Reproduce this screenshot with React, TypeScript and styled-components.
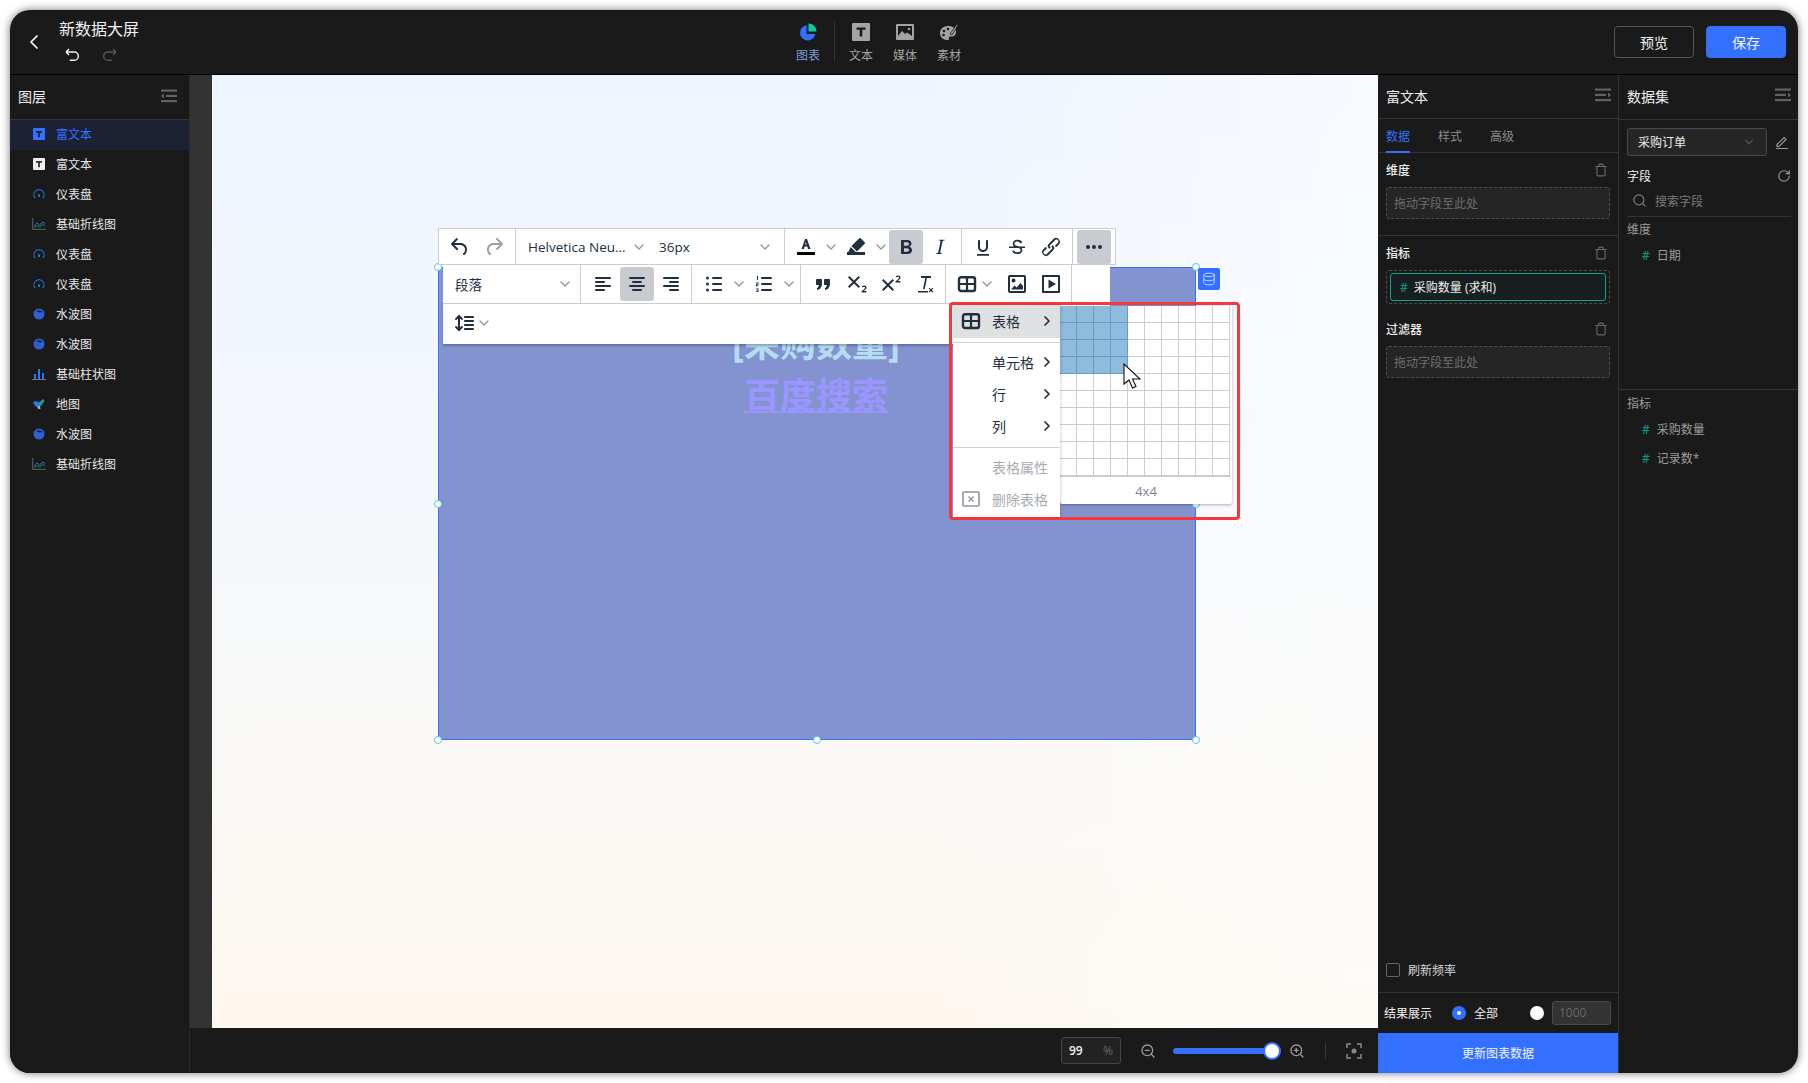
import React from "react";
import styled, {createGlobalStyle} from "styled-components";
import {ChevronDown, ChevronLeft, ChevronRight, Search, RotateCw, Trash, ZoomIn, ZoomOut, Database} from "lucide-react";

const GlobalStyle = createGlobalStyle`
	html, body {
		margin: 0;
		padding: 0;
		background: #fff;
	}
	body {
		font-family: "Open Sans", "Noto Sans CJK SC", sans-serif;
		font-size: 12px;
	}
	* {
		box-sizing: border-box;
	}
`;

const INK = "#222f3e";

const Page = styled.div`
	width: 1808px;
	height: 1083px;
	padding: 10px;
	overflow: hidden;
`;

const Window = styled.div`
	width: 1788px;
	height: 1063px;
	border-radius: 20px;
	overflow: hidden;
	background: #1a1a1a;
	box-shadow: 0 0 8px rgba(0, 0, 0, 0.55);
	display: flex;
	flex-direction: column;
	color: #e8e8e8;
`;

const Header = styled.header`
	height: 65px;
	flex: none;
	display: flex;
	align-items: center;
	border-bottom: 1px solid #000;
`;

const HeaderLeft = styled.div`
	width: 776px;
	display: flex;
	align-items: center;
	padding-left: 12px;
`;

const BackButton = styled.div`
	width: 24px;
	height: 28px;
	display: flex;
	align-items: center;
	justify-content: center;
	margin-right: 13px;
	color: #fff;
`;

const TitleBlock = styled.div`
	display: flex;
	flex-direction: column;
	gap: 6px;
	margin-top: -3px;
`;

const Title = styled.div`
	font-size: 16px;
	line-height: 22px;
	color: #f2f2f2;
`;

const History = styled.div`
	display: flex;
	gap: 20px;
	padding-left: 4px;
	height: 18px;
	align-items: center;
`;

const Tool = styled.div<{$active?: boolean}>`
	width: 44px;
	margin-top: 3px;
	display: flex;
	flex-direction: column;
	align-items: center;
	gap: 7px;
	font-size: 12px;
	line-height: 16px;
	color: ${({$active}) => ($active ? "#7b9bd6" : "#a3a3a3")};
`;

const ToolDivider = styled.div`
	width: 1px;
	height: 40px;
	background: #333;
	margin: 0 4px;
`;

const HeaderRight = styled.div`
	margin-left: auto;
	padding-right: 12px;
	display: flex;
	gap: 12px;
`;

const HeaderButton = styled.button<{$primary?: boolean}>`
	width: 80px;
	height: 32px;
	border-radius: 4px;
	font: inherit;
	font-size: 14px;
	color: #f2f2f2;
	border: 1px solid ${({$primary}) => ($primary ? "#3370ff" : "#555")};
	background: ${({$primary}) => ($primary ? "#3370ff" : "transparent")};
`;

const Body = styled.div`
	flex: 1;
	min-height: 0;
	display: flex;
`;

const Sidebar = styled.aside`
	width: 179px;
	flex: none;
	background: #1a1a1a;
`;

const PanelHeader = styled.div<{$height?: number; $right?: number}>`
	height: ${({$height = 45}) => $height}px;
	display: flex;
	align-items: center;
	justify-content: space-between;
	padding: 0 ${({$right = 12}) => $right}px 2px 8px;
	font-size: 14px;
	color: #f0f0f0;
	border-bottom: 1px solid #333;
`;

const LayerRow = styled.div<{$selected?: boolean}>`
	height: 30px;
	display: flex;
	align-items: center;
	padding: 0 0 2px 22px;
	gap: 10px;
	font-size: 12px;
	background: ${({$selected}) => ($selected ? "#1c2133" : "transparent")};
	color: ${({$selected}) => ($selected ? "#3370ff" : "#e6e6e6")};
`;

const LayerIcon = styled.span`
	width: 14px;
	height: 14px;
	display: flex;
	align-items: center;
	justify-content: center;
`;

const Center = styled.main`
	flex: 1;
	min-width: 0;
	display: flex;
	flex-direction: column;
	border-left: 1px solid #2a2a2a;
`;

const Stage = styled.div`
	flex: 1;
	min-height: 0;
	display: flex;
`;

const Gutter = styled.div`
	width: 22px;
	flex: none;
	background: #333;
`;

const Canvas = styled.div`
	flex: 1;
	min-width: 0;
	position: relative;
	background: linear-gradient(to right, rgba(255, 255, 255, 0) 60%, rgba(255, 255, 255, 0.5)),
		linear-gradient(to bottom, #eff5fe 0%, #f4f8fc 45%, #faf8f5 75%, #fdf7ef 100%);
`;

const Widget = styled.div`
	position: absolute;
	left: 226px;
	top: 192px;
	width: 758px;
	height: 473px;
	background: #8393d0;
	box-shadow: inset 0 0 0 1px #3370ff;
	text-align: center;
	font-weight: 700;
	font-size: 36px;
	line-height: 52px;
	padding: 51px 2px 0 0;
`;

const MeasureText = styled.div`
	color: #b5dcf0;
`;

const LinkText = styled.div`
	color: #9b96ff;
	text-decoration: underline;
	text-decoration-thickness: 2px;
	text-underline-offset: 2px;
`;

const Handle = styled.span`
	position: absolute;
	width: 8px;
	height: 8px;
	border-radius: 50%;
	background: #fff;
	border: 1px solid #5cc4f5;
	transform: translate(-50%, -50%);
`;

const DataBadge = styled.div`
	position: absolute;
	left: 986px;
	top: 193px;
	width: 22px;
	height: 22px;
	border-radius: 2px;
	background: #3370ff;
	color: #cfe0ff;
	display: flex;
	align-items: center;
	justify-content: center;
`;

const Toolbar = styled.div`
	position: absolute;
	left: 226px;
	top: 153px;
	width: 678px;
	color: ${INK};
	font-size: 14px;
`;

const ToolRow = styled.div<{$first?: boolean}>`
	display: flex;
	background: #fff;
	height: ${({$first}) => ($first ? 37 : 39)}px;
	width: ${({$first}) => ($first ? 678 : 667)}px;
	margin-left: ${({$first}) => ($first ? 0 : 5)}px;
	border: 1px solid #ccc;
	border-top: ${({$first}) => ($first ? "1px solid #ccc" : "none")};
	border-left: ${({$first}) => ($first ? "1px solid #ccc" : "none")};
	border-right: ${({$first}) => ($first ? "1px solid #ccc" : "none")};
`;

const LastRow = styled(ToolRow)`
	height: 40px;
	border-bottom: none;
	box-shadow: 0 2px 2px rgba(0, 0, 0, 0.25);
	align-items: center;
	padding: 0 0 2px 4px;
`;

const Group = styled.div<{$width: number; $last?: boolean; $pad?: number}>`
	width: ${({$width}) => $width}px;
	flex: none;
	display: flex;
	align-items: center;
	padding: 0 ${({$pad = 4}) => $pad}px;
	border-right: ${({$last}) => ($last ? "none" : "1px solid #ccc")};
`;

const IconButton = styled.div<{$active?: boolean; $muted?: boolean}>`
	width: 34px;
	height: 34px;
	flex: none;
	border-radius: 3px;
	display: flex;
	align-items: center;
	justify-content: center;
	background: ${({$active}) => ($active ? "#c8cbcf" : "transparent")};
	color: ${({$muted}) => ($muted ? "#9aa1a9" : INK)};
`;

const SplitArrow = styled.div<{$tight?: boolean}>`
	width: 16px;
	flex: none;
	display: flex;
	align-items: center;
	justify-content: center;
	color: #8a929b;
	margin-left: ${({$tight}) => ($tight ? -5 : 0)}px;
	margin-right: ${({$tight}) => ($tight ? 5 : 0)}px;
`;

const SelectBox = styled.div<{$width: number}>`
	width: ${({$width}) => $width}px;
	flex: none;
	display: flex;
	align-items: center;
	justify-content: space-between;
	padding-left: 8px;
	padding-right: 4px;
	font-size: 13.5px;
	svg {
		color: #8a929b;
	}
`;

const FloatLayer = styled.div`
	position: absolute;
	left: 737px;
	top: 227px;
	width: 291px;
	height: 218px;
	border: 3px solid #f5383c;
	border-radius: 4px;
	padding-left: 1px;
	display: flex;
	align-items: flex-start;
`;

const Menu = styled.div`
	width: 107px;
	height: 212px;
	flex: none;
	background: #fff;
	color: ${INK};
	font-size: 14px;
	box-shadow: 1px 0 3px rgba(0, 0, 0, 0.15);
	position: relative;
	z-index: 1;
`;

const MenuItem = styled.div<{$active?: boolean; $disabled?: boolean; $height?: number}>`
	height: ${({$height = 32}) => $height}px;
	display: flex;
	align-items: center;
	padding: 0 5px 1px 9px;
	background: ${({$active}) => ($active ? "#dee0e2" : "transparent")};
	color: ${({$disabled}) => ($disabled ? "#a6abb1" : INK)};
`;

const MenuIconSlot = styled.span<{$shift?: number}>`
	width: 30px;
	flex: none;
	display: flex;
	align-items: center;
	svg {
		margin-left: ${({$shift = 0}) => $shift}px;
	}
`;

const MenuLabel = styled.span`
	flex: 1;
	white-space: nowrap;
`;

const MenuDivider = styled.div<{$top: number; $bottom: number}>`
	height: 1px;
	background: #d0d2d4;
	margin: ${({$top}) => $top}px 0 ${({$bottom}) => $bottom}px;
`;

const GridPanel = styled.div`
	width: 172px;
	height: 198px;
	margin-top: 1px;
	background: #fff;
	box-shadow: 0 1px 3px rgba(0, 0, 0, 0.3);
	border-radius: 0 0 2px 2px;
`;

const CellGrid = styled.div`
	display: grid;
	grid-template-columns: repeat(10, 17px);
	grid-auto-rows: 17px;
	border-bottom: 1px solid #ccc;
	width: 171px;
	height: 171px;
`;

const Cell = styled.div<{$on?: boolean}>`
	background: ${({$on}) => ($on ? "#8fbbdc" : "#fff")};
	border-right: 1px solid ${({$on}) => ($on ? "#5e9fd0" : "#ccc")};
	border-bottom: 1px solid ${({$on}) => ($on ? "#5e9fd0" : "#ccc")};
`;

const GridFooter = styled.div`
	height: 27px;
	display: flex;
	align-items: center;
	justify-content: center;
	font-size: 13px;
	color: #7b8590;
`;

const Pointer = styled.svg`
	position: absolute;
	left: 911px;
	top: 288px;
`;

const BottomBar = styled.div`
	height: 45px;
	flex: none;
	display: flex;
	align-items: center;
	justify-content: flex-end;
	padding-right: 16px;
	background: #1a1a1a;
	color: #9a9a9a;
`;

const ZoomInput = styled.div`
	width: 60px;
	height: 27px;
	border: 1px solid #444;
	border-radius: 3px;
	background: #222;
	display: flex;
	align-items: center;
	justify-content: space-between;
	padding: 0 7px;
	color: #666;
	font-size: 12px;
	margin-right: 19px;
`;

const ZoomValue = styled.span`
	color: #f0f0f0;
	font-weight: 600;
`;

const Slider = styled.div`
	width: 108px;
	height: 6px;
	border-radius: 3px;
	background: #3370ff;
	position: relative;
	margin: 0 8px 0 17px;
`;

const SliderThumb = styled.span`
	position: absolute;
	left: 90px;
	top: -6px;
	width: 18px;
	height: 18px;
	border-radius: 50%;
	background: #fff;
	border: 2px solid #3370ff;
`;

const BarDivider = styled.div`
	width: 1px;
	height: 16px;
	background: #3a3a3a;
	margin: 0 20px;
`;

const ConfigPanel = styled.section`
	width: 240px;
	flex: none;
	display: flex;
	flex-direction: column;
`;

const Tabs = styled.div`
	height: 34px;
	display: flex;
	gap: 28px;
	padding: 0 8px;
	border-bottom: 1px solid #333;
`;

const TabItem = styled.div<{$active?: boolean}>`
	height: 34px;
	line-height: 36px;
	color: ${({$active}) => ($active ? "#3370ff" : "#8c8c8c")};
	border-bottom: 2px solid ${({$active}) => ($active ? "#3370ff" : "transparent")};
`;

const Section = styled.div<{$divided?: boolean}>`
	padding: 8px 8px ${({$divided}) => ($divided ? 16 : 8)}px;
	border-bottom: ${({$divided}) => ($divided ? "1px solid #333" : "none")};
`;

const SectionHead = styled.div`
	height: 16px;
	margin-bottom: 10px;
	display: flex;
	align-items: center;
	justify-content: space-between;
	color: #f0f0f0;
	font-weight: 500;
	padding-top: 1px;
	svg {
		color: #666;
		margin-right: 2px;
	}
`;

const DropZone = styled.div<{$filled?: boolean}>`
	height: ${({$filled}) => ($filled ? 34 : 32)}px;
	border: 1px dashed #4d4d4d;
	border-radius: 3px;
	background: ${({$filled}) => ($filled ? "transparent" : "#252525")};
	color: #6e6e6e;
	display: flex;
	align-items: center;
	padding: ${({$filled}) => ($filled ? "0 3px" : "0 7px")};
`;

const FieldPill = styled.div`
	flex: 1;
	height: 28px;
	border: 1px solid #12a08a;
	border-radius: 3px;
	background: #181f21;
	display: flex;
	align-items: center;
	gap: 6px;
	padding-left: 9px;
	color: #f0f0f0;
`;

const Hash = styled.span`
	color: #11907c;
	font-weight: 600;
`;

const ConfigFooter = styled.div`
	margin-top: auto;
`;

const RefreshRow = styled.div`
	height: 45px;
	display: flex;
	align-items: center;
	gap: 8px;
	padding-left: 8px;
	border-bottom: 1px solid #333;
	color: #d8d8d8;
`;

const CheckBox = styled.span`
	width: 14px;
	height: 14px;
	border: 1px solid #666;
	border-radius: 2px;
`;

const ResultRow = styled.div`
	height: 40px;
	display: flex;
	align-items: center;
	padding-left: 6px;
	color: #f0f0f0;
`;

const Radio = styled.span<{$checked?: boolean}>`
	width: 14px;
	height: 14px;
	border-radius: 50%;
	background: ${({$checked}) => ($checked ? "#3370ff" : "#fff")};
	display: flex;
	align-items: center;
	justify-content: center;
	&::after {
		content: "";
		width: 4px;
		height: 4px;
		border-radius: 50%;
		background: ${({$checked}) => ($checked ? "#fff" : "transparent")};
	}
`;

const LimitInput = styled.div`
	width: 59px;
	height: 24px;
	margin-left: 8px;
	border: 1px solid #4a4a4a;
	border-radius: 3px;
	background: #333;
	color: #666;
	padding-left: 6px;
	line-height: 22px;
`;

const ResultLabel = styled.span`
	width: 68px;
`;

const AllLabel = styled.span`
	margin-left: 8px;
	width: 56px;
`;

const UpdateButton = styled.div`
	height: 40px;
	background: #3370ff;
	color: #f0f4ff;
	display: flex;
	align-items: center;
	justify-content: center;
`;

const DatasetPanel = styled.section`
	width: 180px;
	flex: none;
	border-left: 1px solid #333;
`;

const DatasetTop = styled.div`
	height: 270px;
	padding: 8px 7px 0 8px;
	border-bottom: 1px solid #333;
`;

const DatasetSelectRow = styled.div`
	display: flex;
	align-items: center;
	justify-content: space-between;
	padding-right: 2px;
`;

const DatasetSelect = styled.div`
	width: 140px;
	height: 28px;
	border: 1px solid #4a4a4a;
	border-radius: 3px;
	background: #262626;
	display: flex;
	align-items: center;
	justify-content: space-between;
	padding: 0 10px;
	color: #eee;
	svg {
		color: #666;
	}
`;

const FieldHead = styled.div`
	display: flex;
	align-items: center;
	justify-content: space-between;
	margin-top: 12px;
	height: 16px;
	color: #eee;
	svg {
		color: #999;
	}
`;

const SearchRow = styled.div`
	height: 32px;
	display: flex;
	align-items: center;
	gap: 8px;
	padding-left: 5px;
	color: #7a7a7a;
	border-bottom: 1px solid #333;
	margin-top: 1px;
`;

const GroupLabel = styled.div`
	color: #9a9a9a;
	line-height: 16px;
	margin: 5px 0 3px;
`;

const FieldItem = styled.div`
	height: 28px;
	display: flex;
	align-items: center;
	gap: 7px;
	padding-left: 15px;
	color: #9c9c9c;
	& + & {
		margin-top: 1px;
	}
`;

const DatasetBottom = styled.div`
	padding: 1px 8px 0;
`;

const PanelGlyph = styled.svg<{$flip?: boolean}>`
	margin-bottom: ${({$flip}) => ($flip ? 2 : 0)}px;
`;

const PanelIcon: React.FC<{flip?: boolean}> = ({flip}) => (
	<PanelGlyph $flip={flip} width="16" height="14" viewBox="0 0 16 14" fill="#5f6266">
		<g transform={flip ? undefined : "translate(16 0) scale(-1 1)"}>
			<rect x="0" y="0.5" width="16" height="2.2" />
			<rect x="0" y="5.8" width="11" height="2.2" />
			<rect x="0" y="11" width="16" height="2.2" />
			<path d="M16 6.9l-3-2.5v5z" />
		</g>
	</PanelGlyph>
);

const TIcon: React.FC<{bg: string; fg: string}> = ({bg, fg}) => (
	<svg width="12" height="12" viewBox="0 0 12 12">
		<rect width="12" height="12" rx="1" fill={bg} />
		<path d="M3 3h6v1.7H6.9V9.3H5.1V4.7H3z" fill={fg} />
	</svg>
);

const GaugeIcon = () => (
	<svg width="12" height="12" viewBox="0 0 12 12" fill="none">
		<path d="M2.2 10A5 5 0 1 1 9.8 10" stroke="#2f5fd0" strokeWidth="1.3" />
		<path d="M5 9V7a1 1 0 0 1 2 0v2z" fill="#0d8a78" />
	</svg>
);

const LineIcon = () => (
	<svg width="14" height="12" viewBox="0 0 14 12" fill="none">
		<path d="M.7 0v11.3H14" stroke="#555" strokeWidth="1.2" />
		<path d="M2 8l3-3 2.5 2L11 4l2 1.5" stroke="#2f6fd0" strokeWidth="1" />
		<path d="M2 9.500l3-2 2.500 1.500L11 6.500l2 1.500" stroke="#0d8a78" strokeWidth="1" />
	</svg>
);

const WaveIcon = () => (
	<svg width="12" height="12" viewBox="0 0 12 12">
		<circle cx="6" cy="6" r="5.5" fill="#2f5fd0" />
		<path d="M2.500 4c1.500-1 2.500 0 3.500.3s3 .2 3.500-.3A4.500 4.500 0 0 0 2.500 4z" fill="#10203c" />
	</svg>
);

const BarsIcon = () => (
	<svg width="14" height="12" viewBox="0 0 14 12">
		<rect x="0" y="11" width="14" height="1" fill="#777" />
		<rect x="2" y="6" width="2" height="5" fill="#3370ff" />
		<rect x="6" y="1" width="2" height="10" fill="#3370ff" />
		<rect x="10" y="5" width="2" height="6" fill="#3370ff" />
	</svg>
);

const MapIcon = () => (
	<svg width="12" height="12" viewBox="0 0 12 12">
		<path d="M0 4l3-1 3 1.500L5 9 2 8z" fill="#3370ff" />
		<path d="M6 4.500L10 1l1.500 2L8 8H5z" fill="#16a08a" />
		<path d="M4 8l3 0 .5 3H5z" fill="#8fa8e8" />
	</svg>
);

const layers: {name: string; icon: React.ReactNode; selected?: boolean}[] = [
	{name: "富文本", icon: <TIcon bg="#3370ff" fg="#1c2133" />, selected: true},
	{name: "富文本", icon: <TIcon bg="#eee" fg="#333" />},
	{name: "仪表盘", icon: <GaugeIcon />},
	{name: "基础折线图", icon: <LineIcon />},
	{name: "仪表盘", icon: <GaugeIcon />},
	{name: "仪表盘", icon: <GaugeIcon />},
	{name: "水波图", icon: <WaveIcon />},
	{name: "水波图", icon: <WaveIcon />},
	{name: "基础柱状图", icon: <BarsIcon />},
	{name: "地图", icon: <MapIcon />},
	{name: "水波图", icon: <WaveIcon />},
	{name: "基础折线图", icon: <LineIcon />}
];

const Glyph: React.FC<{d: string; size?: number}> = ({d, size = 24}) => (
	<svg width={size} height={size} viewBox="0 0 24 24" fill="currentColor">
		<path d={d} />
	</svg>
);

const UNDO =
	"M6.4 8H12c3.7 0 6.2 2 6.8 5.1.6 2.7-.4 5.6-2.3 6.8a1 1 0 01-1-1.8c1.1-.6 1.8-2.7 1.4-4.6-.5-2.1-2.2-3.5-4.9-3.5H6.4l3.3 3.3a1 1 0 11-1.4 1.4l-5-5a1 1 0 010-1.4l5-5a1 1 0 011.4 1.4L6.4 8z";
const REDO =
	"M17.6 10H12c-2.8 0-4.4 1.4-4.9 3.5-.4 2 .3 4 1.4 4.6a1 1 0 11-1 1.8c-2-1.2-2.9-4.1-2.3-6.8.6-3 3-5.1 6.8-5.1h5.6l-3.3-3.3a1 1 0 111.4-1.4l5 5a1 1 0 010 1.4l-5 5a1 1 0 01-1.4-1.4l3.3-3.3z";
const BOLD =
	"M7.8 19c-.3 0-.5 0-.6-.2l-.2-.5V5.7c0-.2 0-.4.2-.5l.6-.2h5c1.5 0 2.7.3 3.5 1 .7.6 1.1 1.4 1.1 2.5a3 3 0 01-.6 1.9c-.4.6-1 1-1.6 1.2.4.1.9.3 1.3.6s.8.7 1 1.2c.4.4.5 1 .5 1.6 0 1.3-.4 2.3-1.3 3-.8.7-2.1 1-3.8 1H7.8zm5-8.3c.6 0 1.2-.1 1.6-.5.4-.3.6-.7.6-1.3 0-1.1-.8-1.7-2.3-1.7H9.9v3.5h2.9zm0 6c.8 0 1.3-.1 1.7-.4.4-.4.5-.8.5-1.4 0-.5-.2-1-.6-1.2a3 3 0 00-1.8-.5H10v3.6h2.8z";
const ITALIC =
	"M16.7 4.7l-.1.9h-.3c-.6 0-1 0-1.4.3-.3.3-.4.6-.5 1.1l-2.1 9.8v.6c0 .5.4.8 1.4.8h.2l-.2.8H8l.2-.8h.2c1.1 0 1.8-.5 2-1.5l2-9.8.1-.5c0-.6-.4-.8-1.4-.8h-.3l.2-.9h5.8z";
const UNDERLINE =
	"M16 5c.6 0 1 .4 1 1v6c0 2.800-2.200 5-5 5s-5-2.200-5-5V6c0-.6.4-1 1-1s1 .4 1 1v6c0 1.700 1.300 3 3 3s3-1.300 3-3V6c0-.6.4-1 1-1zM6 19h12v1.800H6z";
const STRIKE =
	"M15.6 8.5c-.5-.7-1-1.1-1.3-1.3-.6-.4-1.3-.6-2-.6-2.7 0-2.8 1.7-2.8 2.1 0 1.6 1.8 2 3.2 2.3 4.4.9 4.6 2.8 4.6 3.9 0 1.4-.7 4.1-5 4.1A6.2 6.2 0 017 16.4l1.5-1.1c.4.6 1.6 2 3.7 2 1.6 0 2.5-.4 3-1 .3-.4.4-.9.4-1.4 0-.9-.8-1.7-3-2.2-2.2-.5-4.8-1-4.8-4 0-2.4 1.9-4 4.6-4 1.5 0 2.6.4 3.6 1 .5.4 1 1 1.4 1.5l-1.8 1.3zM4 11.5h16v1.6H4z";
const LINK =
	"M6.2 12.3a1 1 0 011.4 1.4l-2 2a2 2 0 102.6 2.8l4.8-4.8a1 1 0 000-1.4 1 1 0 111.4-1.3 2.9 2.9 0 010 4L9.6 20a3.9 3.9 0 01-5.5-5.5l2-2zm11.6-.6a1 1 0 01-1.4-1.4l2-2a2 2 0 10-2.6-2.8L11 10.3a1 1 0 000 1.4A1 1 0 119.6 13a2.9 2.9 0 010-4L14.4 4a3.9 3.9 0 015.5 5.5l-2 2z";
const MORE = "M6 10a2 2 0 110 4 2 2 0 010-4zm12 0a2 2 0 110 4 2 2 0 010-4zm-6 0a2 2 0 110 4 2 2 0 010-4z";
const FONT_A = "M14 14l-.7-2.500h-2.700L9.900 14H7.500L11 4h2l3.500 10zm-1.400-4.500l-.7-2.700-.7 2.700z";
const MARKER = "M16.700 3.300l4 4a1 1 0 010 1.400L13 16.500l-5.500-5.500 7.800-7.700a1 1 0 011.400 0zM6.800 12l5.200 5.200-1.600 1.300H5l-1-1z";
const ALIGN_LEFT = "M5 5h14a1 1 0 010 2H5a1 1 0 110-2zm0 4h8a1 1 0 010 2H5a1 1 0 110-2zm0 8h8a1 1 0 010 2H5a1 1 0 010-2zm0-4h14a1 1 0 010 2H5a1 1 0 010-2z";
const ALIGN_CENTER = "M5 5h14a1 1 0 010 2H5a1 1 0 110-2zm3 4h8a1 1 0 010 2H8a1 1 0 110-2zm0 8h8a1 1 0 010 2H8a1 1 0 010-2zm-3-4h14a1 1 0 010 2H5a1 1 0 010-2z";
const ALIGN_RIGHT = "M5 5h14a1 1 0 010 2H5a1 1 0 110-2zm6 4h8a1 1 0 010 2h-8a1 1 0 010-2zm0 8h8a1 1 0 010 2h-8a1 1 0 010-2zm-6-4h14a1 1 0 010 2H5a1 1 0 010-2z";
const BULLETS =
	"M11 5h8c.6 0 1 .4 1 1s-.4 1-1 1h-8a1 1 0 010-2zm0 6h8c.6 0 1 .4 1 1s-.4 1-1 1h-8a1 1 0 010-2zm0 6h8c.6 0 1 .4 1 1s-.4 1-1 1h-8a1 1 0 010-2zM5.500 4.500a1.500 1.500 0 110 3 1.500 1.500 0 010-3zm0 6a1.500 1.500 0 110 3 1.500 1.500 0 010-3zm0 6a1.500 1.500 0 110 3 1.500 1.500 0 010-3z";
const NUMBERS =
	"M10 17h9a1 1 0 010 2h-9a1 1 0 010-2zm0-6h9a1 1 0 010 2h-9a1 1 0 010-2zm0-6h9a1 1 0 010 2h-9a1 1 0 110-2zM5 4h1v4H5V5H4.500zM4 10.500h2.500v2.300H5v.700h1.500v.700H4v-2.100h1.500v-.900H4zM4 16.500h2.500v3.500H4v-.700h1.500v-.700H4.500v-.700h1v-.700H4z";
const QUOTE =
	"M7.500 17h.900c.4 0 .7-.2.900-.6L11 13V8c0-.6-.4-1-1-1H6a1 1 0 00-1 1v4c0 .6.400 1 1 1h2l-1.300 2.700a1 1 0 00.800 2.300zm8 0h.900c.4 0 .7-.2.900-.6L19 13V8c0-.6-.4-1-1-1h-4a1 1 0 00-1 1v4c0 .6.400 1 1 1h2l-1.300 2.700a1 1 0 00.800 2.300z";
const SUB =
	"M10.400 10l4.600 4.600-1.400 1.400L9 11.400 4.400 16 3 14.600 7.600 10 3 5.400 4.400 4 9 8.600 13.600 4 15 5.400zM21.400 20.500h-4.900v-1l2.800-2.600c.5-.5.800-.9.800-1.300 0-.500-.4-.8-1-.8-.5 0-1 .2-1.500.700l-.8-.9c.6-.7 1.500-1 2.400-1 1.400 0 2.300.8 2.300 1.900 0 .900-.5 1.500-1.200 2.100l-1.400 1.300h2.500z";
const SUP =
	"M10.400 13l4.600 4.600-1.400 1.400L9 14.400 4.400 19 3 17.600 7.600 13 3 8.400 4.400 7 9 11.600 13.600 7 15 8.400zM21.400 10.500h-4.900v-1l2.800-2.600c.5-.5.800-.9.800-1.300 0-.500-.4-.8-1-.8-.5 0-1 .2-1.500.700l-.8-.9c.6-.7 1.500-1 2.400-1 1.400 0 2.300.8 2.300 1.900 0 .900-.5 1.500-1.200 2.100l-1.400 1.300h2.500z";
const CLEAR =
	"M8 4h10v2h-4l-2.300 11H10L12.300 6H8zM5 19h10v1.600H5zM16.500 15.800l1.500 1.500 1.500-1.500.8.800-1.500 1.500 1.500 1.500-.8.800-1.500-1.500-1.500 1.500-.8-.8 1.500-1.500-1.500-1.500z";
const IMAGE =
	"M5 3h14a2 2 0 012 2v14a2 2 0 01-2 2H5a2 2 0 01-2-2V5c0-1.100.9-2 2-2zm0 2v14h14V5H5zm3.500 1.500a2 2 0 110 4 2 2 0 010-4zM6 17.500l3.500-4 2.200 2 3.800-4.500 2.500 3v3.500z";
const MEDIA = "M4 3h16a1 1 0 011 1v16a1 1 0 01-1 1H4a1 1 0 01-1-1V4a1 1 0 011-1zm1 2v14h14V5H5zm4.500 2.500L17 12l-7.500 4.500z";
const LINE_HEIGHT =
	"M21 5a1 1 0 01.1 2H13a1 1 0 01-.1-2H21zm0 4a1 1 0 01.1 2H13a1 1 0 01-.1-2H21zm0 4a1 1 0 01.1 2H13a1 1 0 01-.1-2H21zm0 4a1 1 0 01.1 2H13a1 1 0 01-.1-2H21zM7 3.600l3.700 3.700a1 1 0 01-1.300 1.500h-.1L8 7.400v9.200l1.300-1.300a1 1 0 011.300-.1h.1a1 1 0 01.1 1.300v.1L7 20.400l-3.700-3.700a1 1 0 011.300-1.500h.1L6 16.600V7.400L4.700 8.700a1 1 0 01-1.300.1h-.1a1 1 0 01-.1-1.300v-.1L7 3.600z";

const TableGlyph = () => (
	<svg width="24" height="24" viewBox="0 0 24 24" fill="none" stroke="currentColor">
		<rect x="4" y="5.200" width="16" height="13.800" rx="2" strokeWidth="2.400" />
		<path d="M3 12h18M12 5v14" strokeWidth="2.200" />
	</svg>
);

const ColorGlyph: React.FC<{d: string}> = ({d}) => (
	<svg width="24" height="24" viewBox="0 0 24 24" fill="currentColor">
		<path d={d} />
		<rect x="3" y="17" width="18" height="3" fill={d === MARKER ? INK : "#000"} />
	</svg>
);

const Caret: React.FC<{size?: number}> = ({size = 16}) => <ChevronDown size={size} strokeWidth={1.8} />;

const cells = Array.from({length: 100}, (_, i) => i);

const handles = [
	[0, 0],
	[50, 0],
	[100, 0],
	[0, 50],
	[100, 50],
	[0, 100],
	[50, 100],
	[100, 100]
];

const EditorToolbar = () => (
	<Toolbar>
		<ToolRow $first>
			<Group $width={77}>
				<IconButton>
					<Glyph d={UNDO} />
				</IconButton>
				<IconButton $muted>
					<Glyph d={REDO} />
				</IconButton>
			</Group>
			<Group $width={269}>
				<SelectBox $width={131}>
					Helvetica Neu...
					<Caret />
				</SelectBox>
				<SelectBox $width={126}>
					36px
					<Caret />
				</SelectBox>
			</Group>
			<Group $width={177}>
				<IconButton>
					<ColorGlyph d={FONT_A} />
				</IconButton>
				<SplitArrow>
					<Caret />
				</SplitArrow>
				<IconButton>
					<ColorGlyph d={MARKER} />
				</IconButton>
				<SplitArrow>
					<Caret />
				</SplitArrow>
				<IconButton $active>
					<Glyph d={BOLD} />
				</IconButton>
				<IconButton>
					<Glyph d={ITALIC} />
				</IconButton>
			</Group>
			<Group $width={111}>
				<IconButton>
					<Glyph d={UNDERLINE} />
				</IconButton>
				<IconButton>
					<Glyph d={STRIKE} />
				</IconButton>
				<IconButton>
					<Glyph d={LINK} />
				</IconButton>
			</Group>
			<Group $width={43} $last>
				<IconButton $active>
					<Glyph d={MORE} />
				</IconButton>
			</Group>
		</ToolRow>
		<ToolRow>
			<Group $width={138}>
				<SelectBox $width={130}>
					段落
					<Caret />
				</SelectBox>
			</Group>
			<Group $width={111} $pad={5}>
				<IconButton>
					<Glyph d={ALIGN_LEFT} />
				</IconButton>
				<IconButton $active>
					<Glyph d={ALIGN_CENTER} />
				</IconButton>
				<IconButton>
					<Glyph d={ALIGN_RIGHT} />
				</IconButton>
			</Group>
			<Group $width={109} $pad={5}>
				<IconButton>
					<Glyph d={BULLETS} />
				</IconButton>
				<SplitArrow>
					<Caret />
				</SplitArrow>
				<IconButton>
					<Glyph d={NUMBERS} />
				</IconButton>
				<SplitArrow>
					<Caret />
				</SplitArrow>
			</Group>
			<Group $width={145} $pad={5}>
				<IconButton>
					<Glyph d={QUOTE} />
				</IconButton>
				<IconButton>
					<Glyph d={SUB} />
				</IconButton>
				<IconButton>
					<Glyph d={SUP} />
				</IconButton>
				<IconButton>
					<Glyph d={CLEAR} />
				</IconButton>
			</Group>
			<Group $width={126}>
				<IconButton>
					<TableGlyph />
				</IconButton>
				<SplitArrow $tight>
					<Caret />
				</SplitArrow>
				<IconButton>
					<Glyph d={IMAGE} />
				</IconButton>
				<IconButton>
					<Glyph d={MEDIA} />
				</IconButton>
			</Group>
		</ToolRow>
		<LastRow as="div">
			<IconButton>
				<Glyph d={LINE_HEIGHT} />
			</IconButton>
			<SplitArrow $tight>
				<Caret />
			</SplitArrow>
		</LastRow>
	</Toolbar>
);

const TableMenu = () => (
	<FloatLayer>
		<Menu>
			<MenuItem $active $height={33}>
				<MenuIconSlot $shift={-3}>
					<TableGlyph />
				</MenuIconSlot>
				<MenuLabel>表格</MenuLabel>
				<ChevronRight size={16} strokeWidth={2.6} />
			</MenuItem>
			<MenuDivider $top={4} $bottom={3} />
			{["单元格", "行", "列"].map(label => (
				<MenuItem key={label}>
					<MenuIconSlot />
					<MenuLabel>{label}</MenuLabel>
					<ChevronRight size={16} strokeWidth={2.6} />
				</MenuItem>
			))}
			<MenuDivider $top={5} $bottom={3} />
			<MenuItem $disabled>
				<MenuIconSlot />
				<MenuLabel>表格属性</MenuLabel>
			</MenuItem>
			<MenuItem $disabled>
				<MenuIconSlot>
					<svg width="18" height="16" viewBox="0 0 18 16" fill="none" stroke="#8f959c">
						<rect x="1" y="1" width="16" height="14" rx="1" strokeWidth="1.600" />
						<path d="M6.500 5.500l5 5m0-5l-5 5" strokeWidth="1.400" />
					</svg>
				</MenuIconSlot>
				<MenuLabel>删除表格</MenuLabel>
			</MenuItem>
		</Menu>
		<GridPanel>
			<CellGrid>
				{cells.map(i => (
					<Cell key={i} $on={i % 10 < 4 && i < 40} />
				))}
			</CellGrid>
			<GridFooter>4x4</GridFooter>
		</GridPanel>
	</FloatLayer>
);

const App: React.FC = () => {
	return (
		<Page>
			<GlobalStyle />
			<Window>
				<Header>
					<HeaderLeft>
						<BackButton>
							<ChevronLeft size={28} strokeWidth={1.700} />
						</BackButton>
						<TitleBlock>
							<Title>新数据大屏</Title>
							<History>
								<svg width="18" height="18" viewBox="0 0 24 24" fill="none" stroke="#eee" strokeWidth="2">
									<path d="M4 8h11a5 5 0 0 1 0 11H9M4 8l4-4M4 8l4 4" />
								</svg>
								<svg width="18" height="18" viewBox="0 0 24 24" fill="none" stroke="#555" strokeWidth="2">
									<path d="M20 8H9a5 5 0 0 0 0 11h6M20 8l-4-4M20 8l-4 4" />
								</svg>
							</History>
						</TitleBlock>
					</HeaderLeft>
					<Tool $active>
						<svg width="18" height="18" viewBox="0 0 18 18">
							<path d="M7.500 2.200A7.700 7.700 0 1 0 16.300 11H7.500z" fill="#3370ff" />
							<path d="M9.500 .5a8 8 0 0 1 8 8h-8z" fill="#10c7a6" />
						</svg>
						图表
					</Tool>
					<ToolDivider />
					<Tool>
						<svg width="18" height="18" viewBox="0 0 18 18">
							<rect width="18" height="18" rx="1" fill="#a3a3a3" />
							<path d="M4.500 4.500h9v2.300h-3.200v6.700H7.700V6.800H4.500z" fill="#1a1a1a" />
						</svg>
						文本
					</Tool>
					<Tool>
						<svg width="18" height="18" viewBox="0 0 18 18">
							<rect width="18" height="16" y="1" rx="1" fill="#a3a3a3" />
							<rect x="2" y="3" width="14" height="12" fill="#1a1a1a" />
							<path d="M2 13l4-5 3 3 2-1.500 5 3.500v2H2z" fill="#a3a3a3" />
							<circle cx="13" cy="6" r="1.300" fill="#a3a3a3" />
						</svg>
						媒体
					</Tool>
					<Tool>
						<svg width="20" height="18" viewBox="0 0 20 18">
							<path d="M9 3c5 0 8 2.500 8 6 0 3-2 5-5 4.500-2-.3-2.500 .8-2 2 .3 1-.5 1.500-2 1.500C4 17 1 14 1 10s3.500-7 8-7z" fill="#a3a3a3" />
							<path d="M11 11L18 1l1 1-6 10z" fill="#a3a3a3" stroke="#1a1a1a" strokeWidth=".8" />
							<circle cx="5" cy="8" r="1.300" fill="#1a1a1a" />
							<circle cx="4.500" cy="12" r="1.300" fill="#1a1a1a" />
							<circle cx="9" cy="6" r="1.300" fill="#1a1a1a" />
						</svg>
						素材
					</Tool>
					<HeaderRight>
						<HeaderButton>预览</HeaderButton>
						<HeaderButton $primary>保存</HeaderButton>
					</HeaderRight>
				</Header>
				<Body>
					<Sidebar>
						<PanelHeader>
							图层
							<PanelIcon />
						</PanelHeader>
						{layers.map((layer, i) => (
							<LayerRow key={i} $selected={layer.selected}>
								<LayerIcon>{layer.icon}</LayerIcon>
								{layer.name}
							</LayerRow>
						))}
					</Sidebar>
					<Center>
						<Stage>
							<Gutter />
							<Canvas>
								<Widget>
									<MeasureText>[采购数量]</MeasureText>
									<LinkText>百度搜索</LinkText>
									{handles.map(([x, y]) => (
										<Handle key={`${x}-${y}`} style={{left: `${x}%`, top: `${y}%`}} />
									))}
								</Widget>
								<DataBadge>
									<Database size={14} strokeWidth={1.5} />
								</DataBadge>
								<EditorToolbar />
								<TableMenu />
								<Pointer width="18" height="27" viewBox="0 0 18 27">
									<path d="M1 1v20l5-4 3.500 8 3.500-1.500L9.500 16H17z" fill="#fff" stroke="#111" strokeWidth="1.100" />
								</Pointer>
							</Canvas>
						</Stage>
						<BottomBar>
							<ZoomInput>
								<ZoomValue>99</ZoomValue>%
							</ZoomInput>
							<ZoomOut size={16} />
							<Slider>
								<SliderThumb />
							</Slider>
							<ZoomIn size={16} />
							<BarDivider />
							<svg width="16" height="16" viewBox="0 0 16 16" fill="none" stroke="#8a8a8a" strokeWidth="1.500">
								<path d="M1 5V1h4M11 1h4v4M15 11v4h-4M5 15H1v-4" />
								<circle cx="8" cy="8" r="2.500" fill="#8a8a8a" stroke="none" />
							</svg>
						</BottomBar>
					</Center>
					<ConfigPanel>
						<PanelHeader $height={44} $right={7}>
							富文本
							<PanelIcon flip />
						</PanelHeader>
						<Tabs>
							<TabItem $active>数据</TabItem>
							<TabItem>样式</TabItem>
							<TabItem>高级</TabItem>
						</Tabs>
						<Section $divided>
							<SectionHead>
								维度
								<Trash size={14} />
							</SectionHead>
							<DropZone>拖动字段至此处</DropZone>
						</Section>
						<Section>
							<SectionHead>
								指标
								<Trash size={14} />
							</SectionHead>
							<DropZone $filled>
								<FieldPill>
									<Hash>#</Hash>采购数量 (求和)
								</FieldPill>
							</DropZone>
						</Section>
						<Section>
							<SectionHead>
								过滤器
								<Trash size={14} />
							</SectionHead>
							<DropZone>拖动字段至此处</DropZone>
						</Section>
						<ConfigFooter>
							<RefreshRow>
								<CheckBox />
								刷新频率
							</RefreshRow>
							<ResultRow>
								<ResultLabel>结果展示</ResultLabel>
								<Radio $checked />
								<AllLabel>全部</AllLabel>
								<Radio />
								<LimitInput>1000</LimitInput>
							</ResultRow>
							<UpdateButton>更新图表数据</UpdateButton>
						</ConfigFooter>
					</ConfigPanel>
					<DatasetPanel>
						<PanelHeader $right={7}>
							数据集
							<PanelIcon flip />
						</PanelHeader>
						<DatasetTop>
							<DatasetSelectRow>
								<DatasetSelect>
									采购订单
									<Caret size={14} />
								</DatasetSelect>
								<svg width="14" height="14" viewBox="0 0 14 14" fill="none" stroke="#999" strokeWidth="1.200">
									<path d="M2 9.500L9 2.500l2 2-7 7H2zM1 13.500h12" />
								</svg>
							</DatasetSelectRow>
							<FieldHead>
								字段
								<RotateCw size={14} />
							</FieldHead>
							<SearchRow>
								<Search size={15} />
								搜索字段
							</SearchRow>
							<GroupLabel>维度</GroupLabel>
							<FieldItem>
								<Hash>#</Hash>日期
							</FieldItem>
						</DatasetTop>
						<DatasetBottom>
							<GroupLabel>指标</GroupLabel>
							<FieldItem>
								<Hash>#</Hash>采购数量
							</FieldItem>
							<FieldItem>
								<Hash>#</Hash>记录数*
							</FieldItem>
						</DatasetBottom>
					</DatasetPanel>
				</Body>
			</Window>
		</Page>
	);
};

export default App;
